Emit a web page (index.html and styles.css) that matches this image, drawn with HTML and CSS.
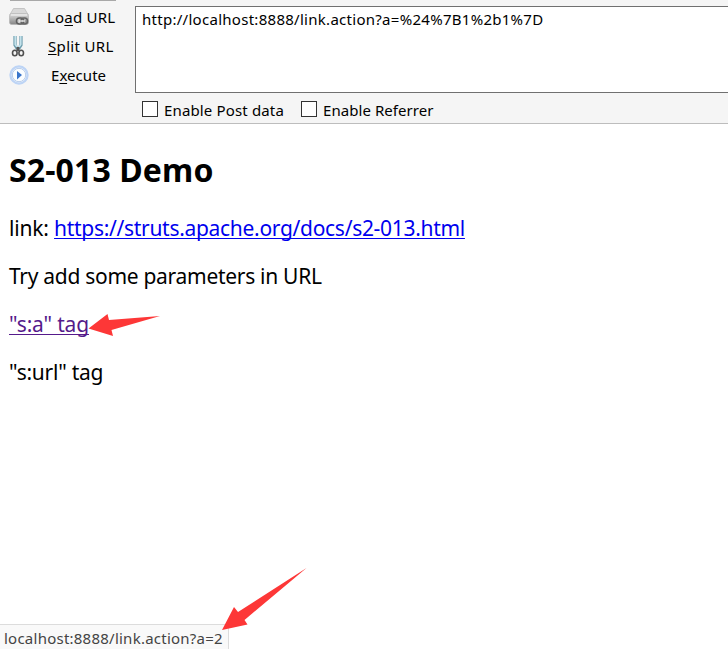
FILE: index.html
```html
<!DOCTYPE html>
<html lang="en">
<head>
<meta charset="utf-8">
<title>S2-013 Demo</title>
<link rel="stylesheet" href="styles.css">
</head>
<body>
<header class="toolbar">
  <nav class="actions">
    <div class="action">
      <svg class="icon" viewBox="0 0 20 20"><defs><linearGradient id="metal" x1="0" y1="0" x2="0" y2="1"><stop offset="0" stop-color="#dedede"/><stop offset="1" stop-color="#858585"/></linearGradient></defs><path d="M4.500 1.500h11l3.500 6H1z" fill="#d9d9d9" stroke="#bbb" stroke-width=".8"/><rect x=".5" y="6.500" width="19" height="11" rx="2" fill="url(#metal)" stroke="#b5b5b5" stroke-width=".7"/><path d="M2 8h16" stroke="#f5f5f5"/><rect x="7.500" y="11" width="7" height="6" rx="3" fill="#ccc" stroke="#606060" stroke-width="1.600"/><rect x="12" y="11" width="6.500" height="6" rx="3" fill="none" stroke="#666" stroke-width="1.600"/><path d="M10 14h6" stroke="#eee" stroke-width="1.300"/></svg>
      <span class="label load">Lo<u>a</u>d URL</span>
    </div>
    <div class="action">
      <svg class="icon" viewBox="0 0 20 22"><path d="M6 1v9l2.500 4M12 1v9l-2.500 4" fill="none" stroke="#6b9cac" stroke-width="3.200"/><path d="M6.200 1v8.500l2.300 3M11.800 1v8.500l-2.300 3" fill="none" stroke="#c4e2eb" stroke-width="1.600"/><path d="M9 12v4" stroke="#555" stroke-width="3"/><ellipse cx="5.800" cy="18" rx="2.300" ry="2.800" fill="#f5f5f5" stroke="#505050" stroke-width="1.600"/><ellipse cx="12.200" cy="18" rx="2.300" ry="2.800" fill="#f5f5f5" stroke="#505050" stroke-width="1.600"/></svg>
      <span class="label split"><u>S</u>plit URL</span>
    </div>
    <div class="action">
      <svg class="icon" viewBox="0 0 20 20"><circle cx="10" cy="10" r="8.600" fill="#edf4ff" stroke="#bdd4f5" stroke-width="2.200"/><circle cx="10" cy="10" r="6.700" fill="#fafdff" stroke="#a9c2e3" stroke-width=".8"/><path d="M8 6l5 4-5 4.500z" fill="#3975cb"/></svg>
      <span class="label exec">E<u>x</u>ecute</span>
    </div>
  </nav>
  <section class="request">
    <div class="url-box"><span class="url">http://localhost:8888/link.action?a=%24%7B1%2b1%7D</span></div>
    <div class="options">
      <label class="option"><i class="check"></i><span class="post">Enable Post data</span></label>
      <label class="option"><i class="check"></i><span class="referrer">Enable Referrer</span></label>
    </div>
  </section>
</header>
<main class="page">
  <h1>S2-013 Demo</h1>
  <p><span class="prefix">link: </span><a class="doc" href="#">https://struts.apache.org/docs/s2-013.html</a></p>
  <p class="hint">Try add some parameters in URL</p>
  <p><a class="visited" href="#">"s:a" tag</a></p>
  <p class="url-tag">"s:url" tag</p>
</main>
<footer class="status">localhost:8888/link.action?a=2</footer>
<svg class="arrows" viewBox="0 0 728 649"><path d="M88.500 328.500L107.500 314l1.500 6 51-4-48.500 14 1.500 6z"/><path d="M222 630l12-23 4 5 68.500-44-62 52 3 4.500z"/></svg>
</body>
</html>
```
FILE: styles.css
```css
* { box-sizing: border-box; }
body { margin: 0; height: 649px; overflow: hidden; background: #fff; color: #000; font-family: "Noto Sans", sans-serif; display: flex; flex-direction: column; }
.toolbar { flex: none; height: 124px; background: #f5f5f5; border-bottom: 1px solid #bdbdbd; display: flex; font-size: 15px; }
.actions { width: 135px; padding-top: 2px; background: linear-gradient(#a8a8a8, #a8a8a8) 10px 0 / 106px 1px no-repeat; }
.action { display: flex; align-items: center; height: 29px; padding-left: 9px; }
.icon { width: 20px; height: 22px; flex: none; }
.label { margin-left: 18px; white-space: nowrap; }
.load { letter-spacing: .2px; }
.split { margin-left: 19px; letter-spacing: .34px; }
.exec { margin-left: 22px; letter-spacing: .05px; }
u, a { text-decoration-thickness: 1px; text-underline-offset: 2px; text-decoration-skip-ink: none; }
.request { flex: 1; padding-top: 6px; }
.url-box { height: 87px; background: #fff; border: 1px solid #707070; border-right: 0; padding: 3px 6px; line-height: 18px; }
.url { letter-spacing: .28px; }
.options { display: flex; gap: 17px; padding: 7px 0 0 7px; }
.option { display: flex; align-items: flex-start; height: 20px; line-height: 20px; gap: 6px; }
.check { width: 16px; height: 16px; margin-top: 1px; background: #fff; border: 1px solid #333; }
.post { letter-spacing: .15px; }
.referrer { letter-spacing: .06px; }
.page { flex: 1; padding: 24px 9px 0; font-size: 21px; }
h1 { margin: 0 0 23px; font-size: 32px; line-height: 44px; letter-spacing: .13px; }
p { margin: 0 0 22px; line-height: 26px; white-space: pre; }
a { color: #0000ee; }
.prefix { letter-spacing: -.18px; }
.doc { letter-spacing: -.3px; }
.hint { letter-spacing: -.29px; }
.visited { color: #551a8b; letter-spacing: -.17px; }
.url-tag { letter-spacing: -.25px; }
.status { align-self: flex-start; width: 229px; height: 25px; background: #f9f9f9; border: solid #dcdcdc; border-width: 1px 1px 0 0; padding-left: 4px; font-size: 15px; line-height: 26px; letter-spacing: .24px; color: #444; }
.arrows { position: absolute; inset: 0; width: 728px; height: 649px; fill: #fd3737; pointer-events: none; }
```
